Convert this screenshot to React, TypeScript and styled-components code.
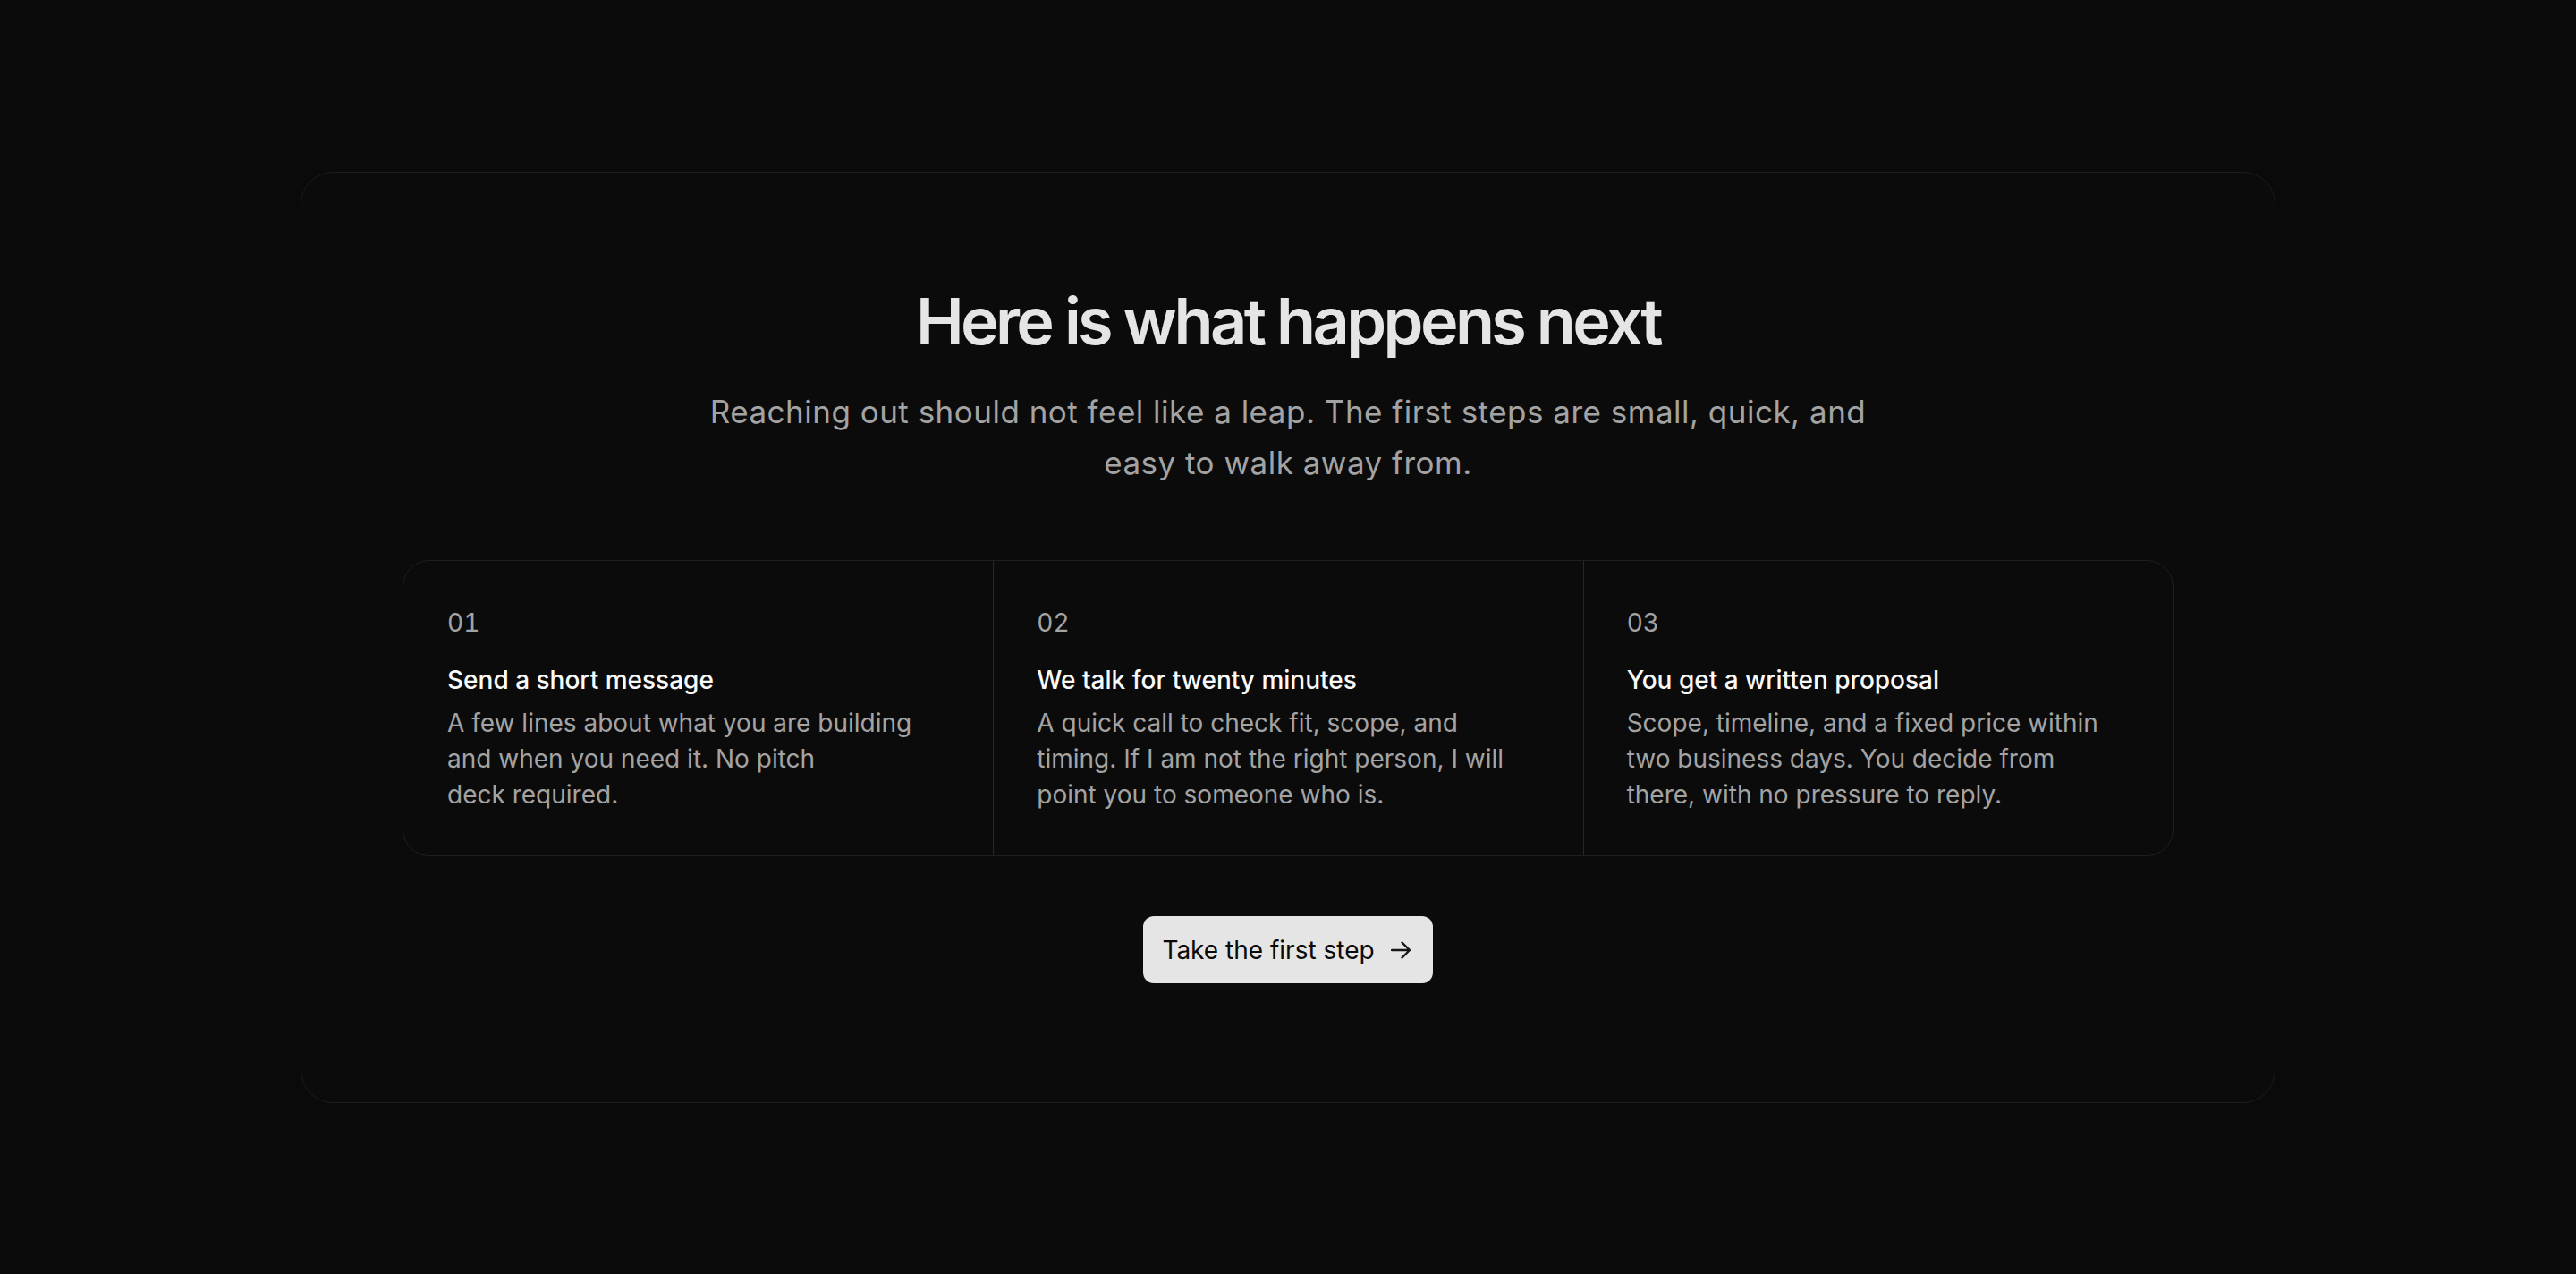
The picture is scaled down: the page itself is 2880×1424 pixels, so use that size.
import React from "react";
import styled, { createGlobalStyle } from "styled-components";

const GlobalStyle = createGlobalStyle`
  html, body {
    margin: 0;
    padding: 0;
    background: #0a0a0a;
  }
  body {
    font-family: Inter, "Noto Sans", "Liberation Sans", sans-serif;
    color: #e5e5e5;
    -webkit-font-smoothing: antialiased;
  }
  * { box-sizing: border-box; }
`;

const Page = styled.main`
  min-height: 1424px;
  display: flex;
  justify-content: center;
  align-items: flex-start;
  padding: 192px 336px 0;
`;

const Card = styled.section`
  width: 100%;
  max-width: 2208px;
  background: #0b0b0b;
  border: 1px solid #1d1d1d;
  border-radius: 36px;
  padding: 126px 113px 133px;
  display: flex;
  flex-direction: column;
  align-items: center;
`;

const Heading = styled.h2`
  margin: 0;
  font-size: 72px;
  line-height: 1.1;
  font-weight: 600;
  letter-spacing: -0.05em;
  color: #e5e5e5;
  text-align: center;
`;

const Lead = styled.p`
  margin: 34px 0 0;
  max-width: 1344px;
  font-size: 35px;
  line-height: 57px;
  font-weight: 400;
  letter-spacing: 0.014em;
  color: #a3a3a3;
  text-align: center;
`;

const Steps = styled.ol`
  list-style: none;
  margin: 80px 0 0;
  padding: 0;
  width: 100%;
  display: grid;
  grid-template-columns: repeat(3, 1fr);
  border: 1px solid #1f1f1f;
  border-radius: 30px;
  overflow: hidden;
`;

const Step = styled.li<{ $first?: boolean }>`
  padding: 49px 48px 48px ${(p) => (p.$first ? "49px" : "48px")};
  border-left: ${(p) => (p.$first ? "none" : "1px solid #262626")};
  display: flex;
  flex-direction: column;
`;

const StepNumber = styled.span`
  font-size: 28px;
  line-height: 40px;
  color: #a3a3a3;
  font-variant-numeric: tabular-nums;
  margin-bottom: 24px;
`;

const StepTitle = styled.h3`
  margin: 0 0 8px;
  font-size: 28px;
  line-height: 40px;
  font-weight: 500;
  color: #fafafa;
`;

const StepText = styled.p`
  margin: 0;
  font-size: 28px;
  line-height: 40px;
  color: #a3a3a3;
  text-wrap: pretty;
`;

const Cta = styled.a`
  margin-top: 67px;
  height: 75px;
  display: inline-flex;
  align-items: center;
  gap: 18px;
  padding: 0 25px 0 21px;
  background: #e5e5e5;
  color: #0a0a0a;
  border-radius: 12px;
  font-size: 28px;
  font-weight: 400;
  text-decoration: none;
  cursor: pointer;
`;

const ArrowIcon = () => (
  <svg width="22" height="20" viewBox="0 0 22 20" fill="none" aria-hidden="true">
    <path
      d="M1 10H21M12.5 1.5L21 10L12.5 18.5"
      stroke="#171717"
      strokeWidth="2.4"
      strokeLinecap="round"
      strokeLinejoin="round"
    />
  </svg>
);

const steps = [
  {
    n: "01",
    title: "Send a short message",
    text: "A few lines about what you are building and when you need it. No pitch deck required.",
  },
  {
    n: "02",
    title: "We talk for twenty minutes",
    text: "A quick call to check fit, scope, and timing. If I am not the right person, I will point you to someone who is.",
  },
  {
    n: "03",
    title: "You get a written proposal",
    text: "Scope, timeline, and a fixed price within two business days. You decide from there, with no pressure to reply.",
  },
];

export default function App() {
  return (
    <>
      <GlobalStyle />
      <Page>
        <Card>
          <Heading>Here is what happens next</Heading>
          <Lead>
            Reaching out should not feel like a leap. The first steps are small, quick, and
            easy to walk away from.
          </Lead>
          <Steps>
            {steps.map((s, i) => (
              <Step key={s.n} $first={i === 0}>
                <StepNumber>{s.n}</StepNumber>
                <StepTitle>{s.title}</StepTitle>
                <StepText>{s.text}</StepText>
              </Step>
            ))}
          </Steps>
          <Cta href="#">
            Take the first step
            <ArrowIcon />
          </Cta>
        </Card>
      </Page>
    </>
  );
}
